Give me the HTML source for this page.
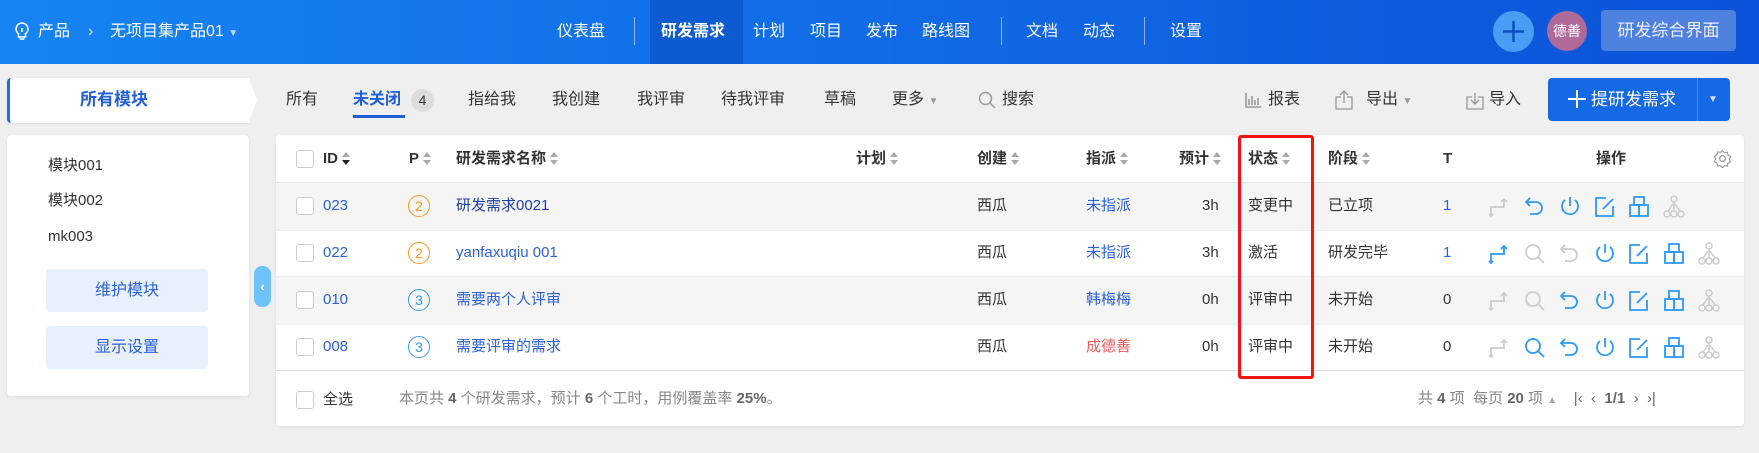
<!DOCTYPE html>
<html><head><meta charset="utf-8"><style>
*{margin:0;padding:0;box-sizing:border-box}
body{width:1759px;height:453px;background:#efefef;font-family:"Liberation Sans","Noto Sans CJK SC",sans-serif;position:relative;overflow:hidden;color:#333}
.a{position:absolute;white-space:nowrap;line-height:22px}
.hdr{position:absolute;left:0;top:0;width:1759px;height:64px;background:linear-gradient(90deg,#1684f3,#0c52d8)}
.hdr .a{color:#fff;font-size:16px;top:21px}
.sep{position:absolute;top:17px;width:1px;height:28px;background:rgba(255,255,255,.5)}
.tab{font-size:16px;top:89px;color:#333}
.card{position:absolute;background:#fff;border-radius:4px;box-shadow:0 1px 3px rgba(0,0,0,.08)}
.th{font-size:15px;font-weight:bold;color:#333;top:148px}
.sort{display:inline-block;vertical-align:middle;margin-left:4px;width:9px;height:14px;position:relative}
.sort:before{content:"";position:absolute;left:0;top:0;border-left:4.5px solid transparent;border-right:4.5px solid transparent;border-bottom:5px solid #aaa}
.sort:after{content:"";position:absolute;left:0;top:8px;border-left:4.5px solid transparent;border-right:4.5px solid transparent;border-top:5px solid #aaa}
.sort.d:after{border-top-color:#222}
.cb{position:absolute;width:18px;height:18px;border:1px solid #ccc;border-radius:3px;background:#fff}
.td{font-size:15px;color:#333}
.lk{color:#2e62d9}
.pc{position:absolute;width:22px;height:22px;border-radius:50%;font-size:14px;text-align:center;line-height:20px}
.row{position:absolute;left:276px;width:1468px}
.ic{position:absolute;width:24px;height:24px}
</style></head><body>
<div class="hdr">
 <svg class="a" style="left:15px;top:22px" width="14" height="20" viewBox="0 0 14 20"><path d="M7 1a6 6 0 0 0-3.5 10.8V15h7v-3.2A6 6 0 0 0 7 1zM4.5 17h5M7 6v4" fill="none" stroke="#fff" stroke-width="1.6"/></svg>
 <div class="a" style="left:38px">产品</div>
 <div class="a" style="left:88px;opacity:.8">›</div>
 <div class="a" style="left:110px">无项目集产品01 <span style="font-size:10px;opacity:.7">▼</span></div>
 <div class="a" style="left:557px">仪表盘</div>
 <div class="sep" style="left:634px"></div>
 <div style="position:absolute;left:650px;top:0;width:93px;height:64px;background:#0c5bd0"></div>
 <div class="a" style="left:661px;font-weight:bold">研发需求</div>
 <div class="a" style="left:753px">计划</div>
 <div class="a" style="left:810px">项目</div>
 <div class="a" style="left:866px">发布</div>
 <div class="a" style="left:922px">路线图</div>
 <div class="sep" style="left:1001px"></div>
 <div class="a" style="left:1026px">文档</div>
 <div class="a" style="left:1083px">动态</div>
 <div class="sep" style="left:1144px"></div>
 <div class="a" style="left:1170px">设置</div>
 <div style="position:absolute;left:1493px;top:11px;width:41px;height:41px;border-radius:50%;background:#4a9cf5"></div>
 <svg class="a" style="left:1502px;top:20px" width="23" height="23"><path d="M11.5 1v21M1 11.5h21" stroke="#0c4fbf" stroke-width="2.5"/></svg>
 <div style="position:absolute;left:1547px;top:11px;width:40px;height:40px;border-radius:50%;background:#b06a9a;color:#fff;font-size:14px;text-align:center;line-height:40px">德善</div>
 <div style="position:absolute;left:1601px;top:10px;width:135px;height:41px;border-radius:4px;background:#4f82df;color:#eef;font-size:17px;text-align:center;line-height:41px">研发综合界面</div>
</div>

<div class="card" style="left:7px;top:78px;width:243px;height:45px;border-left:3px solid #1f6ae8;border-radius:4px 0 0 4px"></div>
<div style="position:absolute;left:249px;top:78px;width:0;height:0;border-top:22.5px solid transparent;border-bottom:22.5px solid transparent;border-left:8px solid #fff"></div>
<div class="a" style="left:80px;top:89px;font-size:17px;font-weight:bold;color:#1f5fd8">所有模块</div>

<div class="card" style="left:7px;top:135px;width:242px;height:261px"></div>
<div class="a td" style="left:48px;top:155px">模块001</div>
<div class="a td" style="left:48px;top:190px">模块002</div>
<div class="a td" style="left:48px;top:226px">mk003</div>
<div style="position:absolute;left:46px;top:269px;width:162px;height:43px;background:#e8f0fc;border-radius:4px;color:#2e62d9;font-size:16px;text-align:center;line-height:43px">维护模块</div>
<div style="position:absolute;left:46px;top:326px;width:162px;height:43px;background:#e8f0fc;border-radius:4px;color:#2e62d9;font-size:16px;text-align:center;line-height:43px">显示设置</div>
<div style="position:absolute;left:254px;top:266px;width:17px;height:41px;background:#6ec3fa;border-radius:8px;color:#fff;font-size:13px;text-align:center;line-height:41px;font-weight:bold">‹</div>

<div class="a tab" style="left:286px">所有</div>
<div class="a tab" style="left:353px;color:#1f5fd8;font-weight:bold">未关闭</div>
<div style="position:absolute;left:353px;top:115px;width:52px;height:3px;background:#1f5fd8"></div>
<div style="position:absolute;left:411px;top:89px;width:23px;height:23px;border-radius:50%;background:#ddd;font-size:14px;text-align:center;line-height:23px">4</div>
<div class="a tab" style="left:468px">指给我</div>
<div class="a tab" style="left:552px">我创建</div>
<div class="a tab" style="left:637px">我评审</div>
<div class="a tab" style="left:721px">待我评审</div>
<div class="a tab" style="left:824px">草稿</div>
<div class="a tab" style="left:892px">更多 <span style="font-size:10px;color:#999">▼</span></div>
<svg class="a" style="left:978px;top:91px" width="18" height="18"><circle cx="7.5" cy="7.5" r="6" fill="none" stroke="#999" stroke-width="1.4"/><path d="M12 12l5 5" stroke="#999" stroke-width="1.4"/></svg>
<div class="a tab" style="left:1002px">搜索</div>
<svg class="a" style="left:1245px;top:92px" width="17" height="16"><path d="M1 1v14h15M4 13V7M7 13V4M10 13V8M13 13V6" stroke="#999" stroke-width="1.6" fill="none"/></svg>
<div class="a tab" style="left:1268px">报表</div>
<svg class="a" style="left:1335px;top:90px" width="18" height="20"><path d="M6 7H1v12h16V7h-5M9 1v12M5 5l4-4 4 4" stroke="#999" stroke-width="1.3" fill="none"/></svg>
<div class="a tab" style="left:1366px">导出 <span style="font-size:10px;color:#999">▼</span></div>
<svg class="a" style="left:1466px;top:90px" width="18" height="20"><path d="M6 7H1v12h16V7h-5M9 3v11M5 10l4 4 4-4" stroke="#999" stroke-width="1.3" fill="none"/></svg>
<div class="a tab" style="left:1489px">导入</div>
<div style="position:absolute;left:1548px;top:78px;width:182px;height:43px;background:#1469e6;border-radius:4px"></div>
<div style="position:absolute;left:1697px;top:78px;width:1px;height:43px;background:#4b8cec"></div>
<svg class="a" style="left:1568px;top:90px" width="18" height="18"><path d="M9 0v18M0 9h18" stroke="#fff" stroke-width="2"/></svg>
<div class="a" style="left:1591px;top:89px;color:#fff;font-size:17px">提研发需求</div>
<div class="a" style="left:1708px;top:89px;color:#cfe0fb;font-size:10px">▼</div>

<div class="card" style="left:276px;top:135px;width:1468px;height:291px"></div>
<div class="row" style="top:182px;height:48px;background:#f5f5f5;border-top:1px solid #e6e6e6"></div>
<div class="row" style="top:230px;height:46px;background:#fff;border-top:1px solid #eee"></div>
<div class="row" style="top:276px;height:48px;background:#f5f5f5;border-top:1px solid #eee"></div>
<div class="row" style="top:324px;height:47px;background:#fff;border-top:1px solid #eee;border-bottom:1px solid #ddd"></div>

<div class="cb" style="left:296px;top:150px"></div>
<div class="a th" style="left:323px">ID<span class="sort d"></span></div>
<div class="a th" style="left:409px">P<span class="sort"></span></div>
<div class="a th" style="left:456px">研发需求名称<span class="sort"></span></div>
<div class="a th" style="left:856px">计划<span class="sort"></span></div>
<div class="a th" style="left:977px">创建<span class="sort"></span></div>
<div class="a th" style="left:1086px">指派<span class="sort"></span></div>
<div class="a th" style="left:1179px">预计<span class="sort"></span></div>
<div class="a th" style="left:1248px">状态<span class="sort"></span></div>
<div class="a th" style="left:1328px">阶段<span class="sort"></span></div>
<div class="a th" style="left:1443px">T</div>
<div class="a th" style="left:1596px">操作</div>
<svg class="a" style="left:1713px;top:149px" width="19" height="19" viewBox="0 0 20 20"><circle cx="10" cy="10" r="3" fill="none" stroke="#999" stroke-width="1.3"/><path d="M10 1.5l2 2.5 3-.5.8 3 2.7 1.5-1.3 2.8 1.3 2.7-2.7 1.5-.8 3-3-.5-2 2.5-2-2.5-3 .5-.8-3L1.5 13l1.3-2.8L1.5 7.5l2.7-1.5.8-3 3 .5z" fill="none" stroke="#999" stroke-width="1.2"/></svg>

<div class="cb" style="left:296px;top:197px"></div>
<div class="a td lk" style="left:323px;top:195px">023</div>
<div class="pc" style="left:408px;top:195px;border:1px solid #f59a23;color:#f59a23">2</div>
<div class="a td lk" style="left:456px;top:195px;color:#1e3fa8">研发需求0021</div>
<div class="a td" style="left:977px;top:195px">西瓜</div>
<div class="a td lk" style="left:1086px;top:195px">未指派</div>
<div class="a td" style="left:1202px;top:195px">3h</div>
<div class="a td" style="left:1248px;top:195px">变更中</div>
<div class="a td" style="left:1328px;top:195px">已立项</div>
<div class="a td lk" style="left:1443px;top:195px">1</div>

<div class="cb" style="left:296px;top:244px"></div>
<div class="a td lk" style="left:323px;top:242px">022</div>
<div class="pc" style="left:408px;top:242px;border:1px solid #f59a23;color:#f59a23">2</div>
<div class="a td lk" style="left:456px;top:242px">yanfaxuqiu 001</div>
<div class="a td" style="left:977px;top:242px">西瓜</div>
<div class="a td lk" style="left:1086px;top:242px">未指派</div>
<div class="a td" style="left:1202px;top:242px">3h</div>
<div class="a td" style="left:1248px;top:242px">激活</div>
<div class="a td" style="left:1328px;top:242px">研发完毕</div>
<div class="a td lk" style="left:1443px;top:242px">1</div>

<div class="cb" style="left:296px;top:291px"></div>
<div class="a td lk" style="left:323px;top:289px">010</div>
<div class="pc" style="left:408px;top:289px;border:1px solid #3a9be8;color:#3a9be8">3</div>
<div class="a td lk" style="left:456px;top:289px">需要两个人评审</div>
<div class="a td" style="left:977px;top:289px">西瓜</div>
<div class="a td lk" style="left:1086px;top:289px">韩梅梅</div>
<div class="a td" style="left:1202px;top:289px">0h</div>
<div class="a td" style="left:1248px;top:289px">评审中</div>
<div class="a td" style="left:1328px;top:289px">未开始</div>
<div class="a td" style="left:1443px;top:289px">0</div>

<div class="cb" style="left:296px;top:338px"></div>
<div class="a td lk" style="left:323px;top:336px">008</div>
<div class="pc" style="left:408px;top:336px;border:1px solid #3a9be8;color:#3a9be8">3</div>
<div class="a td lk" style="left:456px;top:336px">需要评审的需求</div>
<div class="a td" style="left:977px;top:336px">西瓜</div>
<div class="a td" style="left:1086px;top:336px;color:#f25c5c">成德善</div>
<div class="a td" style="left:1202px;top:336px">0h</div>
<div class="a td" style="left:1248px;top:336px">评审中</div>
<div class="a td" style="left:1328px;top:336px">未开始</div>
<div class="a td" style="left:1443px;top:336px">0</div>

<svg width="0" height="0" style="position:absolute"><defs>
<g id="sp" fill="none" stroke-width="1.8"><path d="M3 21V12h13V4M13 7l3-3 3 3M1 19l2 2 2-2"/></g>
<g id="sr" fill="none" stroke-width="1.8"><circle cx="10" cy="10" r="7"/><path d="M15 15l6 6"/></g>
<g id="bk" fill="none" stroke-width="1.8"><path d="M7 3L3 7l4 4M3 7h10a6 6 0 0 1 0 12H7"/></g>
<g id="pw" fill="none" stroke-width="1.8"><path d="M12 2v9M7 5a8 8 0 1 0 10 0"/></g>
<g id="ed" fill="none" stroke-width="1.8"><path d="M20 11v10H3V3h10M10 14l10-10"/></g>
<g id="bx" fill="none" stroke-width="1.8"><rect x="7" y="2" width="10" height="8"/><rect x="3" y="10" width="9" height="11"/><rect x="12" y="10" width="9" height="11"/></g>
<g id="tr" fill="none" stroke-width="1.5"><circle cx="12" cy="4" r="3"/><circle cx="5" cy="19" r="3"/><circle cx="12" cy="19" r="3"/><circle cx="19" cy="19" r="3"/><path d="M12 7v9M11 9l-5 7M13 9l5 7"/></g>
</defs></svg>
<svg class="ic" style="left:1488px;top:195px" stroke="#ccc"><use href="#sp"/></svg>
<svg class="ic" style="left:1523px;top:195px" stroke="#2c9af5"><use href="#bk"/></svg>
<svg class="ic" style="left:1558px;top:195px" stroke="#2c9af5"><use href="#pw"/></svg>
<svg class="ic" style="left:1593px;top:195px" stroke="#2c9af5"><use href="#ed"/></svg>
<svg class="ic" style="left:1627px;top:195px" stroke="#2c9af5"><use href="#bx"/></svg>
<svg class="ic" style="left:1662px;top:195px" stroke="#ccc"><use href="#tr"/></svg>
<svg class="ic" style="left:1488px;top:242px" stroke="#2c9af5"><use href="#sp"/></svg>
<svg class="ic" style="left:1523px;top:242px" stroke="#ccc"><use href="#sr"/></svg>
<svg class="ic" style="left:1558px;top:242px" stroke="#ccc"><use href="#bk"/></svg>
<svg class="ic" style="left:1593px;top:242px" stroke="#2c9af5"><use href="#pw"/></svg>
<svg class="ic" style="left:1627px;top:242px" stroke="#2c9af5"><use href="#ed"/></svg>
<svg class="ic" style="left:1662px;top:242px" stroke="#2c9af5"><use href="#bx"/></svg>
<svg class="ic" style="left:1697px;top:242px" stroke="#ccc"><use href="#tr"/></svg>
<svg class="ic" style="left:1488px;top:289px" stroke="#ccc"><use href="#sp"/></svg>
<svg class="ic" style="left:1523px;top:289px" stroke="#ccc"><use href="#sr"/></svg>
<svg class="ic" style="left:1558px;top:289px" stroke="#2c9af5"><use href="#bk"/></svg>
<svg class="ic" style="left:1593px;top:289px" stroke="#2c9af5"><use href="#pw"/></svg>
<svg class="ic" style="left:1627px;top:289px" stroke="#2c9af5"><use href="#ed"/></svg>
<svg class="ic" style="left:1662px;top:289px" stroke="#2c9af5"><use href="#bx"/></svg>
<svg class="ic" style="left:1697px;top:289px" stroke="#ccc"><use href="#tr"/></svg>
<svg class="ic" style="left:1488px;top:336px" stroke="#ccc"><use href="#sp"/></svg>
<svg class="ic" style="left:1523px;top:336px" stroke="#2c9af5"><use href="#sr"/></svg>
<svg class="ic" style="left:1558px;top:336px" stroke="#2c9af5"><use href="#bk"/></svg>
<svg class="ic" style="left:1593px;top:336px" stroke="#2c9af5"><use href="#pw"/></svg>
<svg class="ic" style="left:1627px;top:336px" stroke="#2c9af5"><use href="#ed"/></svg>
<svg class="ic" style="left:1662px;top:336px" stroke="#2c9af5"><use href="#bx"/></svg>
<svg class="ic" style="left:1697px;top:336px" stroke="#ccc"><use href="#tr"/></svg>

<div style="position:absolute;left:1238px;top:135px;width:76px;height:244px;border:3px solid #f01414;border-radius:3px"></div>

<div class="cb" style="left:296px;top:391px"></div>
<div class="a td" style="left:323px;top:389px">全选</div>
<div class="a" style="left:399px;top:388px;font-size:15px;color:#888">本页共 <b style="color:#666">4</b> 个研发需求，预计 <b style="color:#666">6</b> 个工时，用例覆盖率 <b style="color:#666">25%</b>。</div>
<div class="a" style="left:1418px;top:388px;font-size:15px;color:#888">共 <b style="color:#666">4</b> 项 &nbsp;每页 <b style="color:#666">20</b> 项 <span style="font-size:10px;color:#aaa">▲</span> &nbsp;&nbsp; <span style="color:#666">|‹</span> &nbsp;<span style="color:#666">‹</span> &nbsp;<b style="color:#666">1/1</b> &nbsp;<span style="color:#666">›</span> &nbsp;<span style="color:#666">›|</span></div>
</body></html>
